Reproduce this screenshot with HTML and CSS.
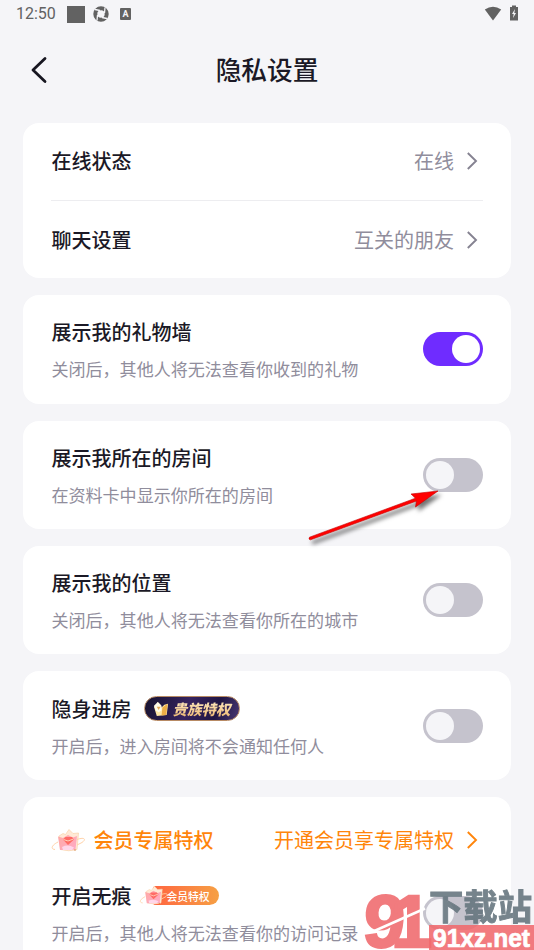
FILE: index.html
```html
<!DOCTYPE html>
<html lang="zh-CN">
<head>
<meta charset="utf-8">
<title>隐私设置</title>
<link rel="stylesheet" href="styles.css">
</head>
<body>
<svg class="defs" width="0" height="0" aria-hidden="true">
  <defs>
    <linearGradient id="gem" x1="0" y1="0" x2="1" y2="1">
      <stop offset="0" stop-color="#ff9f9c"/><stop offset="1" stop-color="#ff9fc4"/>
    </linearGradient>
    <symbol id="chevron" viewBox="0 0 12 20">
      <path d="M1.8 2 10 10 1.8 18" fill="none" stroke="currentColor" stroke-width="1.9"/>
    </symbol>
    <symbol id="crown" viewBox="0 0 34 24">
      <path d="M8 8 12 5.500 14.500 6.500 18 1.500 22 5.500 27.500 5 26 21.500Q18 24 9.500 21.500Z" fill="#ffe9d6" stroke="#f9d3ab" stroke-width=".7"/>
      <path d="M7 8.500 12 10 17 7 22 9.500 26 8 24.500 21.500 9 22Z" fill="url(#gem)" opacity=".85"/>
      <path d="M12 11.500 14.500 9 21 9 23 11.500 17 17Z" fill="#ff6b65"/>
      <path d="M12.500 11.500 17 13 22.500 11" stroke="#ffd0b8" stroke-width="1" fill="none"/>
      <path d="M11 19Q17 16 23 19.500L21 22H12Z" fill="#ffd6ea"/>
      <path d="M7 14C1 17-1 21 4 21.500M26 11.500C33 9 36 11 31 14.500L26 17" fill="none" stroke="#ffd2a8" stroke-width="1"/>
      <circle cx="24" cy="22" r=".8" fill="#d9884d"/>
    </symbol>
  </defs>
</svg>
<main class="screen">
  <div class="status">
    <span class="clock">12:50</span>
    <i class="block"></i>
    <svg class="ring" viewBox="0 0 16 16"><circle cx="8" cy="8" r="5.700" fill="none" stroke="#626262" stroke-width="4"/><path d="M2 3.500 7 4.500M12 1.500 11.500 7M14 12.500 9 11.500M4 14.500 4.500 9" stroke="#f5f5f8" stroke-width="1.300"/></svg>
    <span class="letter">A</span>
    <svg class="wifi" viewBox="0 0 18 15"><path d="M.8 3.500Q9-2.200 17.200 3.500L9 14.500Z" fill="#626262"/></svg>
    <svg class="battery" viewBox="0 0 10 16"><path d="M3 .5h4v1.500h2v13.500H1V2h2Z" fill="#626262"/><path d="M6 4 3 9h1.700L4 13l3-5H5.300Z" fill="#f5f5f8"/></svg>
  </div>
  <header class="header">
    <svg class="back" viewBox="0 0 18 28"><path d="M15 2.500 3 14 15 25.500" fill="none" stroke="#171620" stroke-width="2.800" stroke-linecap="round" stroke-linejoin="round"/></svg>
    <h1>隐私设置</h1>
  </header>

  <div class="cards">
    <section class="card links">
      <div class="link"><h2>在线状态</h2><span class="value">在线</span><svg class="chev"><use href="#chevron"/></svg></div>
      <div class="link"><h2>聊天设置</h2><span class="value">互关的朋友</span><svg class="chev"><use href="#chevron"/></svg></div>
    </section>
    <section class="card setting">
      <div class="copy"><h2>展示我的礼物墙</h2><p>关闭后，其他人将无法查看你收到的礼物</p></div>
      <span class="toggle on"></span>
    </section>
    <section class="card setting">
      <div class="copy"><h2>展示我所在的房间</h2><p>在资料卡中显示你所在的房间</p></div>
      <span class="toggle"></span>
    </section>
    <section class="card setting">
      <div class="copy"><h2>展示我的位置</h2><p>关闭后，其他人将无法查看你所在的城市</p></div>
      <span class="toggle"></span>
    </section>
    <section class="card setting">
      <div class="copy">
        <h2>隐身进房
          <span class="noble"><svg viewBox="0 0 18 17"><path d="M1 6 4 4 5 1 8 4 9 7 12 4 16 3 14.500 15 4 16Z" fill="#ffe7a6"/><path d="M10 7 15.500 3 14 15 9 15.500Z" fill="#edae46"/><path d="M1 5 5 1 9 5 9 10 6 12 3 10Z" fill="#fffbe9"/><path d="M4 6h4L6 9.500Z" fill="#e6a957"/></svg><b>贵族特权</b></span>
        </h2>
        <p>开启后，进入房间将不会通知任何人</p>
      </div>
      <span class="toggle"></span>
    </section>
    <section class="card member">
      <div class="link vip"><svg class="gem"><use href="#crown"/></svg><h2>会员专属特权</h2><span class="value">开通会员享专属特权</span><svg class="chev"><use href="#chevron"/></svg></div>
      <div class="setting">
        <div class="copy">
          <h2>开启无痕 <span class="badge"><svg><use href="#crown"/></svg><b>会员特权</b></span></h2>
          <p>开启后，其他人将无法查看你的访问记录</p>
        </div>
        <span class="toggle"></span>
      </div>
    </section>
  </div>

  <svg class="arrow" viewBox="0 0 150 70">
    <g fill="#f00" stroke="#c40000" stroke-width=".6"><path d="M9.500 57.200 115.500 18.200 111 14 138 11 115.500 27 116.500 21 10.500 59.800Q8 59.500 9.500 57.200Z"/></g>
  </svg>
  <svg class="watermark" viewBox="0 0 172 64">
    <g class="numerals">
      <text x="0" y="0" transform="translate(0 61) skewX(-4)">9</text>
      <text x="0" y="0" transform="translate(29 61)">1</text>
    </g>
    <path d="M10 46 63 22.500" stroke="#fff" stroke-width="2.500"/>
    <rect x="67" y="39" width="105" height="25" fill="#f0696d" opacity=".88"/>
    <text class="site" x="67" y="34" textLength="103" lengthAdjust="spacingAndGlyphs">下载站</text>
    <text class="domain" x="71" y="61" textLength="97" lengthAdjust="spacingAndGlyphs">91xz.net</text>
  </svg>
</main>
</body>
</html>
```
FILE: styles.css
```css
* { box-sizing: border-box; }
html, body { margin: 0; height: 100%; overflow: hidden; }
body { background: #f5f5f8; color: #1b1926; font-family: "Noto Sans CJK SC", sans-serif; }
.defs { position: absolute; }
svg { display: block; flex: none; }
h1, h2, p { margin: 0; white-space: nowrap; }
.screen { position: relative; width: 534px; height: 950px; overflow: hidden; }

.status { display: flex; align-items: center; height: 28px; padding: 0 15px 0 16px; }
.clock { width: 51px; font: 16px/28px Roboto, sans-serif; letter-spacing: 0; color: #626262; }
.block { width: 18px; height: 17px; background: #626262; }
.ring { width: 16px; height: 16px; margin-left: 8px; }
.letter { width: 11px; height: 12px; margin-left: 11px; border-radius: 1px; background: #626262; color: #f5f5f8; font: bold 9px/12px Roboto, sans-serif; text-align: center; }
.wifi { width: 18px; height: 15px; margin: -2px 0 0 auto; }
.battery { width: 10px; height: 16px; margin: -3px 0 0 7px; }

.header { display: flex; align-items: center; justify-content: center; height: 84px; padding-bottom: 2px; position: relative; }
.back { position: absolute; left: 30px; top: 28px; width: 18px; height: 28px; }
h1 { font-size: 25.700px; font-weight: 500; line-height: 36px; }

.cards { display: flex; flex-direction: column; gap: 17px; padding: 10.600px 23px 0; }
.card { border-radius: 16px; background: #fff; flex: none; }
.links { height: 155.700px; padding: 0 28px; }
.link { display: flex; align-items: center; height: 77.500px; }
.link + .link { height: 78.200px; padding-top: 1px; border-top: 1px solid #ededf0; }
h2 { display: flex; align-items: center; height: 30px; padding-left: .4px; font-size: 20px; line-height: 30px; font-weight: 500; }
.value { margin-left: auto; font-size: 20px; line-height: 30px; color: #908d9c; }
.chev { width: 12px; height: 20px; margin: 0 5px 0 12px; color: #858291; }
.setting { display: flex; align-items: center; justify-content: space-between; height: 108.400px; padding: 0 28px; }
.copy { display: flex; flex-direction: column; gap: 9px; padding-top: 1px; }
p { padding-left: .4px; font-size: 17.060px; line-height: 26px; color: #908d9c; }
.toggle { display: flex; width: 60px; height: 34px; padding: 3px; border-radius: 17px; background: #c5c3cd; }
.toggle::before { content: ""; width: 28px; height: 28px; border-radius: 50%; background: #f5f5f8; }
.toggle.on { justify-content: flex-end; background: #6f2cff; }
.toggle.on::before { background: #fff; }

.noble { display: flex; align-items: center; width: 96px; height: 25px; margin-left: 13px; padding-left: 8px; border: 1px solid #b88b65; border-radius: 13px; background: linear-gradient(110deg, #17132f, #36235f 45%, #211643 75%, #493773); }
.noble svg { width: 17px; height: 16px; }
.noble b { margin-left: 2px; padding-right: 3px; font-size: 14.500px; line-height: 22px; font-weight: 900; font-style: italic; color: transparent; background: linear-gradient(#fff0cc, #eeb469); -webkit-background-clip: text; background-clip: text; }

.member { height: 260px; }
.member .link { height: 86px; padding: 0 28px; }
.vip, .vip .chev { color: #ff850b; }
.vip .value { color: #ff850b; }
.gem { width: 34px; height: 24px; margin-right: 8px; }
.member .setting { height: 60px; margin-top: 0; }
.badge { position: relative; display: flex; align-items: center; width: 66px; height: 19px; margin-left: 22px; padding-left: 13px; border-radius: 3px 10px 10px 3px; background: linear-gradient(90deg, #ff6540, #f6a044); }
.badge svg { position: absolute; left: -14px; top: -1px; width: 29px; height: 20px; }
.badge b { font-size: 10.800px; line-height: 18px; font-weight: 500; color: #fff; }

.arrow { position: absolute; left: 300px; top: 480px; width: 150px; height: 70px; overflow: visible; filter: drop-shadow(3px 4px 2px rgba(0, 0, 0, .55)); }
.watermark { position: absolute; left: 362px; top: 886px; width: 172px; height: 64px; }
.numerals { fill: #f0696d; stroke: #f0696d; stroke-width: 2.5; opacity: .88; font: bold 74px "Liberation Sans", sans-serif; }
.site { font: 700 35px "Noto Sans CJK SC", sans-serif; fill: #64747d; stroke: #64747d; stroke-width: 1; opacity: .88; }
.domain { font: bold 26px "Liberation Sans", sans-serif; fill: #fff; stroke: #fff; stroke-width: .7; }
```
